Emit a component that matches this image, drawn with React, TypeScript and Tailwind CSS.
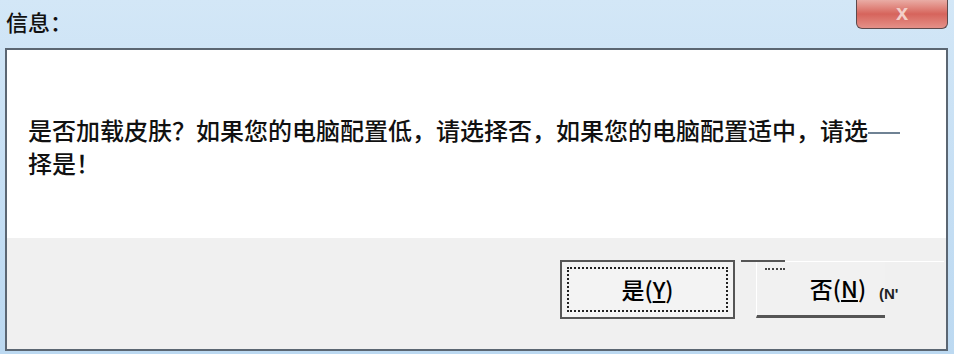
import React from 'react';

const cjk = { fontFamily: '"Noto Sans CJK SC", "Noto Sans", sans-serif' };

const App = () => {
  return (
    <div
      className="w-[954px] h-[354px] flex flex-col bg-gradient-to-b from-[#d3e7f7] via-[#c6dff4] to-[#bcd9f1] text-black overflow-hidden"
      style={cjk}
    >
      {/* title bar */}
      <div className="h-[48px] flex items-start justify-between shrink-0">
        <div className="pl-[6px] pt-[8px] text-[22px] leading-[26px] font-medium text-[#111]">信息：</div>
        <div className="mr-[6px] w-[92px] h-[29px] rounded-b-[6px] border border-t-0 border-[#5d4a4c] bg-gradient-to-b from-[#e9aca5] via-[#d6645c] to-[#e49088] flex items-center justify-center">
          <span className="text-[22px] leading-none text-[#f3cfc9] font-bold pb-[3px]" style={{ fontFamily: '"Liberation Sans", sans-serif' }}>
            x
          </span>
        </div>
      </div>

      {/* client area */}
      <div className="flex-1 ml-[5px] mr-[6px] mb-[3px] border-2 border-[#5b6672] flex flex-col">
        <div className="h-[188px] bg-white pt-[63px] pl-[21px] shrink-0">
          <p className="text-[24px] leading-[33px] font-medium text-[#111] whitespace-nowrap">
            是否加载皮肤？如果您的电脑配置低，请选择否，如果您的电脑配置适中，请选
            <span className="inline-block w-[32px] h-[2px] bg-[#6f8294] align-middle" />
            <br />
            择是！
          </p>
        </div>
        <div className="flex-1 bg-[#f0f0f0] pt-[22px] pl-[553px] flex items-start">
          {/* default button */}
          <div className="w-[175px] h-[59px] border-2 border-[#555] bg-[#f3f3f3] p-[5px]">
            <div className="w-full h-full border-2 border-dotted border-[#222] flex items-center justify-center text-[23px] leading-none font-medium">
              是(<span className="underline">Y</span>)
            </div>
          </div>
          {/* second button */}
          <div className="relative ml-[21px] mt-[1px] w-[129px] h-[57px] border-l border-t border-white border-b-[3px] border-b-[#555] bg-[#f1f1f1] flex items-center justify-center text-[23px] leading-none font-medium">
            <span className="absolute left-[8px] top-[6px] w-[20px] border-t-2 border-dotted border-[#444]" />
            <span className="absolute left-[-16px] top-[-2px] w-[44px] h-[2px] bg-[#555]" />
            <span className="absolute left-[34px] top-[-1px] w-[153px] h-[1px] bg-white" />
            <span className="ml-[34px]">
              否(<span className="underline">N</span>)
            </span>
            <span className="absolute left-[122px] top-[24px] text-[15px] font-bold text-[#222]" style={{ fontFamily: '"Liberation Sans", sans-serif' }}>
              (N'
            </span>
          </div>
        </div>
      </div>
    </div>
  );
};

export default App;
